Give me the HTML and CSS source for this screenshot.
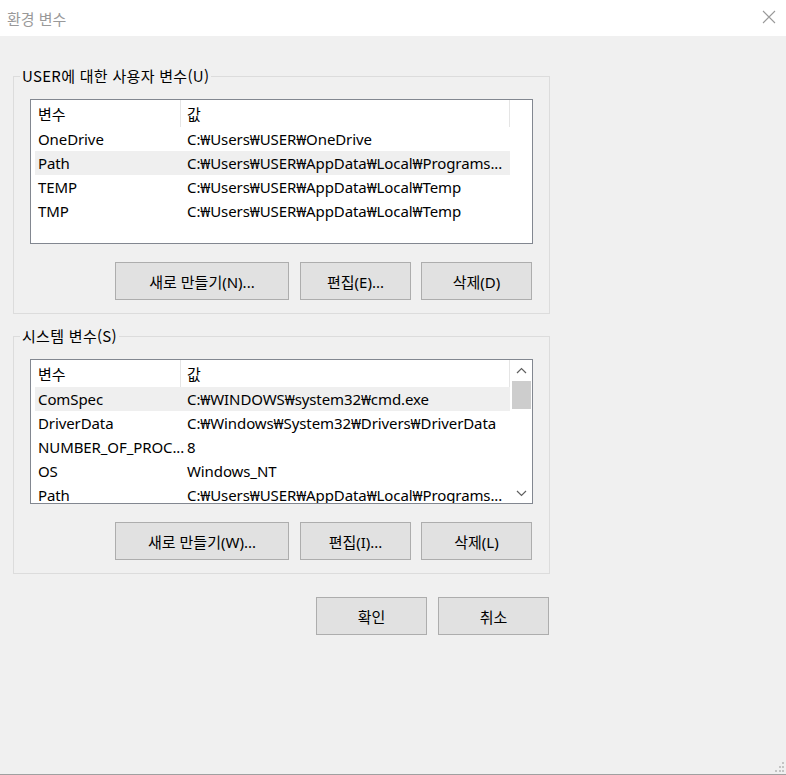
FILE: index.html
```html
<!DOCTYPE html>
<html lang="ko">
<head>
    <meta charset="UTF-8">
    <title>환경 변수</title>
    <link rel="stylesheet" href="styles.css">
</head>
<body>

<div class="ventana">
    <div class="barra-titulo">
        <span class="titulo">환경 변수</span>
        <svg class="cerrar" width="14" height="14" viewBox="0 0 14 14">
            <path d="M1 1 L13 13 M13 1 L1 13" stroke="#9a9a9a" stroke-width="1.1" fill="none"/>
        </svg>
    </div>

    <fieldset class="grupo">
        <legend>USER에 대한 사용자 변수(U)</legend>
        <div class="lista">
            <div class="lista-cuerpo">
                <div class="fila encabezado"><span>변수</span><span>값</span></div>
                <div class="fila"><span>OneDrive</span><span>C:₩Users₩USER₩OneDrive</span></div>
                <div class="fila activa"><span>Path</span><span>C:₩Users₩USER₩AppData₩Local₩Programs...</span></div>
                <div class="fila"><span>TEMP</span><span>C:₩Users₩USER₩AppData₩Local₩Temp</span></div>
                <div class="fila"><span>TMP</span><span>C:₩Users₩USER₩AppData₩Local₩Temp</span></div>
            </div>
        </div>
        <div class="botones">
            <button class="boton ancho">새로 만들기(N)...</button>
            <button class="boton">편집(E)...</button>
            <button class="boton">삭제(D)</button>
        </div>
    </fieldset>

    <fieldset class="grupo segundo">
        <legend>시스템 변수(S)</legend>
        <div class="lista">
            <div class="lista-cuerpo">
                <div class="fila encabezado"><span>변수</span><span>값</span></div>
                <div class="fila activa"><span>ComSpec</span><span>C:₩WINDOWS₩system32₩cmd.exe</span></div>
                <div class="fila"><span>DriverData</span><span>C:₩Windows₩System32₩Drivers₩DriverData</span></div>
                <div class="fila"><span>NUMBER_OF_PROC...</span><span>8</span></div>
                <div class="fila"><span>OS</span><span>Windows_NT</span></div>
                <div class="fila"><span>Path</span><span>C:₩Users₩USER₩AppData₩Local₩Programs...</span></div>
            </div>
            <!-- barra de desplazamiento -->
            <div class="scroll">
                <svg width="21" height="20" viewBox="0 0 21 20">
                    <path d="M6 13 L10.5 8.5 L15 13" stroke="#606060" stroke-width="1.2" fill="none"/>
                </svg>
                <div class="scroll-pulgar"></div>
                <div class="scroll-resto"></div>
                <svg width="21" height="20" viewBox="0 0 21 20">
                    <path d="M6 8 L10.5 12.5 L15 8" stroke="#606060" stroke-width="1.2" fill="none"/>
                </svg>
            </div>
        </div>
        <div class="botones">
            <button class="boton ancho">새로 만들기(W)...</button>
            <button class="boton">편집(I)...</button>
            <button class="boton">삭제(L)</button>
        </div>
    </fieldset>

    <div class="botones-dialogo">
        <button class="boton">확인</button>
        <button class="boton">취소</button>
    </div>

    <svg class="agarre" width="12" height="12" viewBox="0 0 12 12">
        <rect x="9" y="1" width="2" height="2" fill="#c4c4c4"/>
        <rect x="6" y="5" width="2" height="2" fill="#c4c4c4"/>
        <rect x="9" y="5" width="2" height="2" fill="#c4c4c4"/>
        <rect x="2" y="9" width="2" height="2" fill="#c4c4c4"/>
        <rect x="6" y="9" width="2" height="2" fill="#c4c4c4"/>
        <rect x="9" y="9" width="2" height="2" fill="#c4c4c4"/>
    </svg>
</div>

</body>
</html>
```

FILE: styles.css
```css
body {
    margin: 0;
    font-family: "Noto Sans", "Noto Sans CJK KR", sans-serif;
    font-size: 15px;
    color: #000;
    background: #f0f0f0;
}

.ventana {
    height: 775px;
    box-sizing: border-box;
    display: flex;
    flex-direction: column;
    background: #f0f0f0;
    border-bottom: 1px solid #a0a0a0;
}

.barra-titulo {
    height: 36px;
    flex: none;
    background: #fff;
    display: flex;
    align-items: center;
    padding: 0 10px 0 7px;
}

.titulo {
    flex: 1;
    color: #999;
    font-family: "Noto Sans CJK KR", sans-serif;
}

.cerrar {
    margin-top: -2px;
}

.grupo {
    width: 537px;
    box-sizing: border-box;
    margin: 30px 0 0 13px;
    padding: 0 0 13px 0;
    border: 1px solid #dcdcdc;
    min-width: 0;
}

.grupo.segundo {
    margin-top: 12px;
}

.grupo legend {
    margin-left: 6px;
    padding: 0 2px;
    line-height: 20px;
    font-family: "Noto Sans CJK KR", sans-serif;
    letter-spacing: 0.3px;
}

.lista {
    width: 503px;
    height: 145px;
    box-sizing: border-box;
    margin: 13px 0 0 16px;
    border: 1px solid #828790;
    background: #fff;
    display: flex;
    overflow: hidden;
}

.lista-cuerpo {
    width: 475px;
    padding-left: 4px;
    flex: none;
}

.fila {
    display: grid;
    grid-template-columns: 146px 329px;
    height: 24px;
    line-height: 24px;
    white-space: nowrap;
    overflow: hidden;
    letter-spacing: -0.1px;
}

.fila span:first-child {
    padding-left: 3px;
}

.fila span:last-child {
    padding-left: 6px;
}

.fila.encabezado {
    height: 27px;
    line-height: 27px;
    margin-left: -4px;
    grid-template-columns: 150px 329px;
    font-family: "Noto Sans CJK KR", sans-serif;
    letter-spacing: 0;
}

.fila.encabezado span:first-child {
    padding-left: 7px;
    border-right: 1px solid #e5e5e5;
}

.fila.encabezado span:last-child {
    border-right: 1px solid #e5e5e5;
}

.fila.activa {
    background: #efefef;
}

.scroll {
    margin-left: auto;
    width: 21px;
    display: flex;
    flex-direction: column;
    background: #fff;
}

.scroll-pulgar {
    height: 28px;
    margin: 1px 1px 0 1px;
    background: #cdcdcd;
}

.scroll-resto {
    flex: 1;
}

.botones {
    display: flex;
    margin: 18px 0 0 101px;
}

.boton {
    width: 111px;
    height: 38px;
    margin-left: 10px;
    background: #e1e1e1;
    border: 1px solid #adadad;
    font-family: "Noto Sans", "Noto Sans CJK KR", sans-serif;
    font-size: 15px;
    color: #000;
    padding: 0;
}

.boton.ancho {
    width: 174px;
    margin-left: 0;
    margin-right: 1px;
}

.botones-dialogo {
    display: flex;
    justify-content: flex-end;
    width: 549px;
    margin-top: 23px;
}

.botones-dialogo .boton {
    margin-left: 11px;
}

.agarre {
    margin-top: auto;
    align-self: flex-end;
    margin-right: 1px;
    margin-bottom: 1px;
}
```
